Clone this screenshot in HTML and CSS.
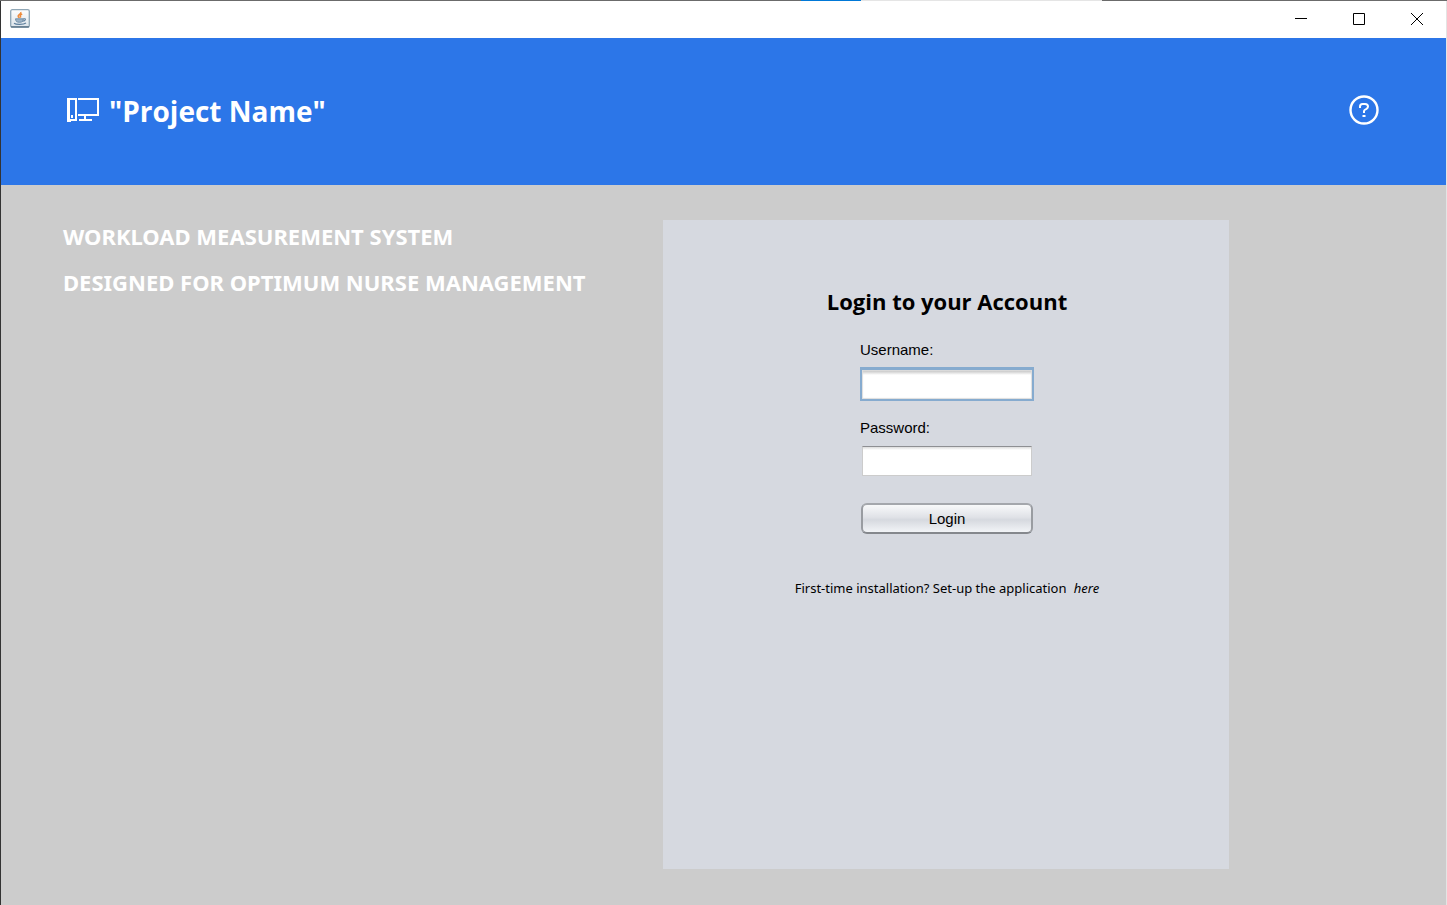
FILE: index.html
```html
<!DOCTYPE html>
<html lang="en">
<head>
<meta charset="utf-8">
<title>Project Name</title>
<link rel="stylesheet" href="styles.css">
</head>
<body>
<div class="edge"><span class="edge-dark"></span><span class="edge-blue"></span><span class="edge-light"></span><span class="edge-dark-end"></span></div>
<div class="window">
  <div class="titlebar">
    <svg class="app-icon" width="20" height="19" viewBox="0 0 20 19" aria-hidden="true">
      <defs><linearGradient id="tile" x1="0" y1="0" x2="0" y2="1"><stop offset="0" stop-color="#fdfdfd"/><stop offset="1" stop-color="#dbe3ea"/></linearGradient></defs>
      <rect x=".7" y=".7" width="18.6" height="17.6" rx="1.5" fill="url(#tile)" stroke="#8fa6b5" stroke-width="1.3"/>
      <path d="M1 17.8h18" stroke="#60798c" stroke-width="1.4"/>
      <path d="M10.800 3c.9 2-3.400 2.800-2.600 4.600.3.7 1 1 1.200 1.400M12.200 5c-2.400 1-2.400 2.200-1.200 3.600" fill="none" stroke="#ee8b3c" stroke-width="1.500"/>
      <path d="M5.500 9.800h7.800c0 2.700-1 3.500-3.800 3.500s-3.800-.8-4-3.500z" fill="#9bb2c5" stroke="#5d7f9d" stroke-width=".8"/>
      <path d="M13.300 9.800c3-.7 2.800 2.100-.8 2.500M4 14.200c2 1.600 9.500 1.600 12-.2" fill="none" stroke="#5d7f9d" stroke-width="1.100"/>
    </svg>
    <div class="window-controls">
      <button type="button" aria-label="Minimize"><svg width="12" height="12" viewBox="0 0 12 12"><path d="M0 5.500h12"/></svg></button>
      <button type="button" aria-label="Maximize"><svg width="12" height="12" viewBox="0 0 12 12"><path d="M.5.500h11v11H.500z"/></svg></button>
      <button type="button" aria-label="Close"><svg width="12" height="12" viewBox="0 0 12 12"><path d="M0 0l12 12M12 0L0 12"/></svg></button>
    </div>
  </div>
  <header class="banner">
    <div class="brand">
      <svg width="32" height="24" viewBox="0 0 32 24" aria-hidden="true" fill="none" stroke="#fff" stroke-width="2">
        <path d="M4 23H1V1h8v21H3M11 1h20v16H11M18 17v5M12 22h13M5 17v3"/>
        <path d="M2.500 2v21" stroke-width="1"/>
      </svg>
      <h1>"Project Name"</h1>
    </div>
    <button type="button" class="help" aria-label="Help">
      <svg width="30" height="30" viewBox="0 0 30 30" fill="none" stroke="#fff" stroke-width="2">
        <circle cx="15" cy="15" r="13.500" stroke-width="2.400"/>
        <path d="M11 13v-1.500q0-2.500 2.500-2.500h2.500q3 0 3 2.500 0 1.500-1.500 2.300-2.500 1.200-2.500 2.200v2M13.500 21h3"/>
      </svg>
    </button>
  </header>
  <main class="content">
    <section class="intro">
      <h2>WORKLOAD MEASUREMENT SYSTEM</h2>
      <h2>DESIGNED FOR OPTIMUM NURSE MANAGEMENT</h2>
    </section>
    <section class="card">
      <h2>Login to your Account</h2>
      <form class="login">
        <label for="username">Username:</label>
        <input id="username" class="focused" type="text">
        <label for="password">Password:</label>
        <input id="password" type="password">
        <button type="button">Login</button>
      </form>
      <p class="setup">First-time installation? Set-up the application <a href="#">here</a></p>
    </section>
  </main>
</div>
</body>
</html>
```
FILE: styles.css
```css
* { box-sizing: border-box; }
body { margin: 0; min-height: 100vh; display: flex; flex-direction: column; font-family: "Noto Sans", "Open Sans", sans-serif; color: #000; }
h1, h2, p { margin: 0; }
button { border: 0; padding: 0; background: none; }
svg { display: block; }

.edge { height: 1px; display: grid; grid-template-columns: 801fr 60fr 241fr 345fr; }
.edge-dark, .edge-dark-end { background: #6b6b6b; }
.edge-blue { background: #0078d7; }
.edge-light { background: #e5e5e5; }

.window { flex: 1; display: flex; flex-direction: column; border-left: 1px solid #333; border-right: 1px solid #e4e4e4; }

.titlebar { height: 37px; display: flex; align-items: center; justify-content: space-between; padding: 0 0 2px 9px; background: #fff; }
.window-controls { display: flex; align-self: stretch; }
.window-controls button { width: 58px; display: grid; place-items: center; }
.window-controls svg { fill: none; stroke: #000; stroke-width: 1; }

.banner { height: 147px; display: flex; align-items: center; justify-content: space-between; padding: 0 67px 3px 66px; background: #2c76e8; }
.brand { display: flex; align-items: center; gap: 10px; color: #fff; }
.brand h1 { padding-top: 2px; font: bold 28px/40px "Open Sans", "Noto Sans", sans-serif; }

.content { flex: 1; display: grid; grid-template-columns: 662fr 566fr 217fr; padding: 35px 0 36px; background: #ccc; }
.intro { padding-left: 62px; color: #fff; }
.intro h2 { font-size: 22px; line-height: 32px; margin-bottom: 14px; white-space: nowrap; }

.card { display: flex; flex-direction: column; align-items: center; padding: 66px 0 0 2px; background: #d6d9e0; }
.card h2 { font: bold 22px/30px "Open Sans", "Noto Sans", sans-serif; }
.login { width: 174px; display: flex; flex-direction: column; margin-top: 24px; font: 15px/20px "Liberation Sans", Arial, sans-serif; }
.login input { height: 30px; margin: 8px 2px 19px; padding: 0 6px; border: 1px solid #ccc; border-top: 1px solid #8e8f93; background: linear-gradient(#dcdcdc, #fff 3px); font: inherit; outline: none; }
.login .focused { height: 34px; margin: 7px 0 17px; border: 2px solid #86abcf; border-top-width: 3px; background: linear-gradient(#bbb, #fff 5px); box-shadow: inset 0 0 1px 1px #ddd; }
.login button { height: 31px; margin: 8px 1px 0; border: 2px solid #888b90; border-color: #a4a7ac #999ca1 #85888d; border-radius: 6px; background: linear-gradient(#f8f9fa, #e0e2e7 45%, #d6d9df 55%, #f2f4f7); font: inherit; }
.setup { margin-top: 44px; font-size: 13px; line-height: 20px; }
.setup a { margin-left: 4px; color: #000; font-style: italic; text-decoration: none; }
```
